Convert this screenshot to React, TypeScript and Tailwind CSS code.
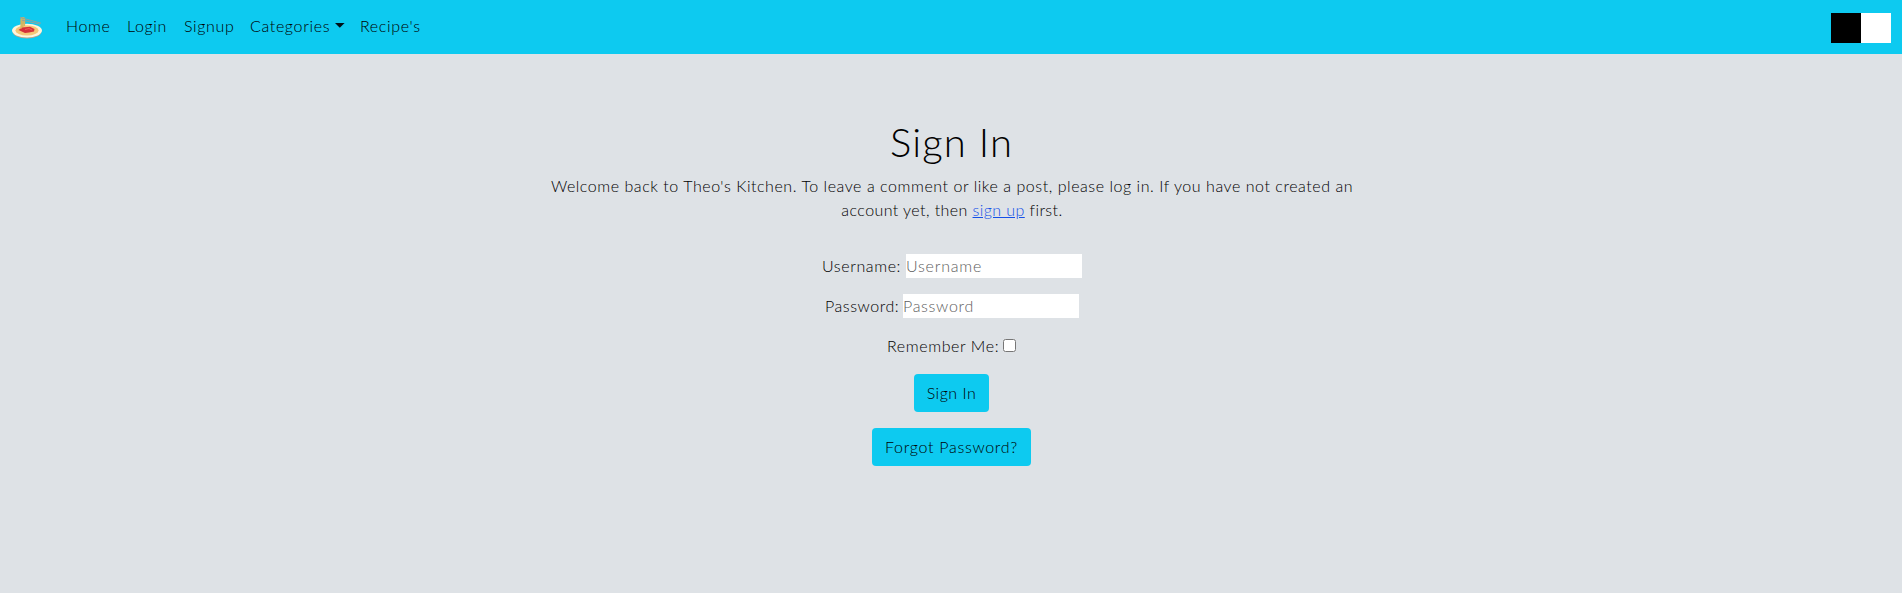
import React from "react";

function PastaLogo() {
  return (
    <svg width="32" height="24" viewBox="0 0 32 24" className="block">
      <ellipse cx="15" cy="15.4" rx="14.4" ry="7.2" fill="#b9a58c" />
      <ellipse cx="15" cy="14.6" rx="15" ry="6.8" fill="#fff4dc" />
      <ellipse cx="15" cy="14.4" rx="11.6" ry="5.2" fill="#f6c878" />
      <path d="M6.5 14 L10 11.5 L18 10.8 L22.5 13 L22 15.6 L17 16.4 L13 17 Z" fill="#d5303a" />
      <path d="M13 13.5 L17 12.5 L20 14" stroke="#ed5d55" strokeWidth="1" fill="none" />
      <path d="M9.2 12.5 V3.5 C9.2 1 13 1 12.4 4 V10 M10.8 11 V3" stroke="#d9b45c" strokeWidth="1.5" fill="none" />
      <path d="M8 1.4 L29 7.2 M10 4.2 L28 8.2" stroke="#8fa3a0" strokeWidth="1" fill="none" />
    </svg>
  );
}

export default function App() {
  return (
    <div className="min-h-[593px] bg-[#dee2e6] font-['Lato',sans-serif] text-base font-light leading-6 text-black">
      <nav className="flex h-[54px] items-start justify-between bg-[#0dcaf0] pr-[11px] pl-3 text-black">
        <div className="flex">
          <a href="#" className="mt-4 w-[54px]"><PastaLogo /></a>
          <div className="flex pt-[14px] tracking-[0.65px] whitespace-nowrap">
            <a href="#" className="w-[61px]">Home</a>
            <a href="#" className="w-[57px]">Login</a>
            <a href="#" className="w-[66px]">Signup</a>
            <a href="#" className="flex w-[110px]">
              <span className="w-[85px]">Categories</span>
              <svg width="10" height="5" viewBox="0 0 10 5" className="mt-[9px]"><path d="M0 0H9.6L4.8 4.8Z" fill="#001018" /></svg>
            </a>
            <a href="#">Recipe's</a>
          </div>
        </div>
        <div className="mt-[13px] flex">
          <button aria-label="Dark theme" className="size-[30px] bg-black" />
          <button aria-label="Light theme" className="size-[30px] bg-white" />
        </div>
      </nav>
      <main className="flex flex-col items-center pt-16 whitespace-nowrap">
        <h1 className="pl-px text-[40px] leading-[48px] tracking-[1.1px]">Sign In</h1>
        <p className="mt-2 pl-0.5 text-center">
          <span className="tracking-[0.55px]">Welcome back to Theo's Kitchen. To leave a comment or like a post, please log in. If you have not created an</span>
          <br />
          <span className="tracking-[0.42px]">account yet, then <a href="#" className="text-[#1450e8] underline">sign up</a> first.</span>
        </p>
        <form className="mt-8 flex flex-col items-center gap-4">
          <label className="ml-0.5 flex w-[260px]">
            <span className="w-[84px] tracking-[0.6px]">Username:</span>
            <input placeholder="Username" className="h-6 w-[176px] bg-white p-0 tracking-[0.8px] outline-none placeholder:text-[#606060]" />
          </label>
          <label className="ml-0.5 flex w-[254px]">
            <span className="w-[78px] tracking-[0.55px]">Password:</span>
            <input type="password" placeholder="Password" className="h-6 w-[176px] bg-white p-0 tracking-[0.7px] outline-none placeholder:text-[#606060]" />
          </label>
          <label className="flex w-[130px]">
            <span className="w-[117px] pl-px tracking-[0.6px]">Remember Me:</span>
            <input type="checkbox" className="mt-[5px] size-[13px] shrink-0" />
          </label>
          <button type="button" className="h-[38px] w-[75px] rounded bg-[#0dcaf0] pl-px tracking-[0.5px]">Sign In</button>
          <button type="button" className="h-[38px] w-[159px] rounded bg-[#0dcaf0] pl-px tracking-[0.7px]">Forgot Password?</button>
        </form>
      </main>
    </div>
  );
}
